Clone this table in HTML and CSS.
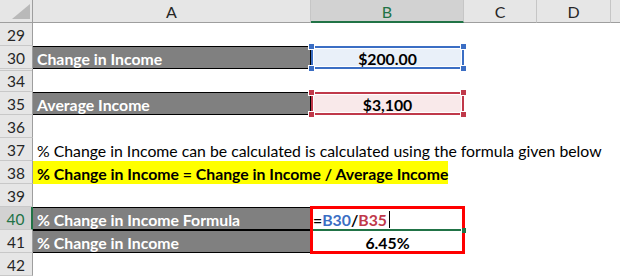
FILE: index.html
```html
<!DOCTYPE html>
<html>
<head>
<meta charset="utf-8">
<link rel="stylesheet" href="styles.css">
</head>
<body>
<div class="sheet">
  <div class="ch corner"><span class="tri"></span></div>
  <div class="ch">A</div>
  <div class="ch chsel">B</div>
  <div class="ch">C</div>
  <div class="ch">D</div>
  <div class="ch last"></div>

  <div class="rh">29</div><div class="c"></div><div class="c"></div><div class="c"></div><div class="c"></div><div class="c"></div>

  <div class="rh">30</div>
  <div class="c label">Change in Income</div>
  <div class="c val blue"><span class="hd tl"></span><span class="hd bl"></span><span class="hd tr"></span><span class="hd br"></span>$200.00</div>
  <div class="c"></div><div class="c"></div><div class="c"></div>

  <div class="rh hidden-above">34</div><div class="c"></div><div class="c"></div><div class="c"></div><div class="c"></div><div class="c"></div>

  <div class="rh">35</div>
  <div class="c label">Average Income</div>
  <div class="c val red"><span class="hd tl"></span><span class="hd bl"></span><span class="hd tr"></span><span class="hd br"></span>$3,100</div>
  <div class="c"></div><div class="c"></div><div class="c"></div>

  <div class="rh">36</div><div class="c"></div><div class="c"></div><div class="c"></div><div class="c"></div><div class="c"></div>

  <div class="rh">37</div>
  <div class="c plain">% Change in Income can be calculated is calculated using the formula given below</div>
  <div class="c"></div><div class="c"></div><div class="c"></div><div class="c"></div>

  <div class="rh">38</div>
  <div class="c"><span class="hilite">% Change in Income = Change in Income / Average Income</span></div>
  <div class="c"></div><div class="c"></div><div class="c"></div><div class="c"></div>

  <div class="rh">39</div><div class="c"></div><div class="c"></div><div class="c"></div><div class="c"></div><div class="c"></div>

  <div class="rh rhsel">40</div>
  <div class="c label">% Change in Income Formula</div>
  <div class="c formula"><span class="box"></span><span class="eq">=</span><span class="r1">B30</span><span class="eq">/</span><span class="r2">B35</span><span class="caret"></span><span class="active"></span><span class="fill"></span></div>
  <div class="c"></div><div class="c"></div><div class="c"></div>

  <div class="rh">41</div>
  <div class="c label">% Change in Income</div>
  <div class="c val">6.45%</div>
  <div class="c"></div><div class="c"></div><div class="c"></div>

  <div class="rh">42</div><div class="c"></div><div class="c"></div><div class="c"></div><div class="c"></div><div class="c"></div>
</div>
</body>
</html>
```
FILE: styles.css
```css
html, body {
  margin: 0;
  padding: 0;
  background: #ffffff;
}
body {
  width: 620px;
  height: 278px;
  overflow: hidden;
  font-family: "Lato", "Liberation Sans", sans-serif;
  font-size: 15.8px;
  color: #000;
}
.sheet {
  display: grid;
  grid-template-columns: 33px 278px 153px 73px 74px 1fr;
  grid-auto-rows: 23px;
}
.ch {
  box-sizing: border-box;
  background: #e6e6e6;
  border-bottom: 1px solid #9e9e9e;
  border-right: 1px solid #c6c6c6;
  display: flex;
  align-items: center;
  justify-content: center;
  color: #262626;
  font-size: 16px;
}
.ch.corner {
  position: relative;
  border-right: 1px solid #9e9e9e;
}
.tri {
  position: absolute;
  right: 2px;
  bottom: 3px;
  width: 0;
  height: 0;
  border-left: 18px solid transparent;
  border-bottom: 15px solid #b9b9b9;
}
.ch.chsel {
  background: #d2d2d2;
  color: #217346;
  border-bottom: 2px solid #217346;
  padding-top: 1px;
}
.ch.last {
  border-right: none;
}
.rh {
  box-sizing: border-box;
  background: #e6e6e6;
  border-right: 1px solid #9e9e9e;
  border-bottom: 1px solid #c8c8c8;
  display: flex;
  align-items: center;
  justify-content: center;
  color: #262626;
  font-size: 15.5px;
  padding-top: 1px;
}
.rh.hidden-above {
  border-top: 1px solid #c8c8c8;
  margin-top: -1px;
  box-shadow: inset 0 1px 0 #e6e6e6, inset 0 2px 0 #c8c8c8;
}
.rh.rhsel {
  background: #d2d2d2;
  color: #217346;
  border-right: 2px solid #217346;
}
.c {
  box-sizing: border-box;
  position: relative;
  display: flex;
  align-items: center;
  white-space: nowrap;
  overflow: visible;
  padding-top: 1px;
}
.label {
  background: #808080;
  border-top: 1px solid #000;
  border-bottom: 1px solid #000;
  border-right: 1px solid #000;
  color: #ffffff;
  font-weight: bold;
  padding-left: 4px;
}
.plain {
  padding-left: 4px;
  z-index: 1;
}
.hilite {
  display: flex;
  align-items: center;
  height: 23px;
  margin-top: -1px;
  padding-top: 1px;
  width: 422px;
  box-sizing: border-box;
  padding-left: 4px;
  background: #ffff00;
  font-weight: bold;
  z-index: 1;
}
.val {
  justify-content: center;
  font-weight: bold;
  color: #000;
}
.val.blue {
  background: #e9f0f9;
  border: 2px solid #3b6ec4;
  box-shadow: inset 0 0 0 1px #ffffff;
}
.val.red {
  background: #f9e9ea;
  border: 2px solid #c0394a;
  box-shadow: inset 0 0 0 1px #ffffff;
}
.hd {
  position: absolute;
  width: 5px;
  height: 5px;
  border: 1px solid #ffffff;
}
.blue .hd { background: #3b6ec4; }
.red .hd { background: #c0394a; }
.hd.tl { left: -5px; top: -5px; }
.hd.bl { left: -5px; bottom: -5px; }
.hd.tr { right: -5px; top: -5px; }
.hd.br { right: -5px; bottom: -5px; }
.formula {
  padding-left: 2px;
  font-weight: bold;
}
.box {
  position: absolute;
  left: -1px;
  top: -1px;
  width: 155px;
  height: 48px;
  box-sizing: border-box;
  border: 3px solid #ff0000;
  z-index: 2;
}
.eq { color: #000; }
.r1 { color: #3b6ec4; }
.r2 { color: #c0394a; }
.caret {
  display: inline-block;
  width: 1px;
  height: 17px;
  background: #000;
  margin-left: 2px;
}
.active {
  position: absolute;
  left: 2px;
  bottom: -1px;
  width: 148px;
  height: 2px;
  background: #217346;
  z-index: 3;
}
.fill {
  position: absolute;
  right: -2px;
  bottom: -3px;
  width: 4px;
  height: 5px;
  background: #217346;
  z-index: 3;
}
```
